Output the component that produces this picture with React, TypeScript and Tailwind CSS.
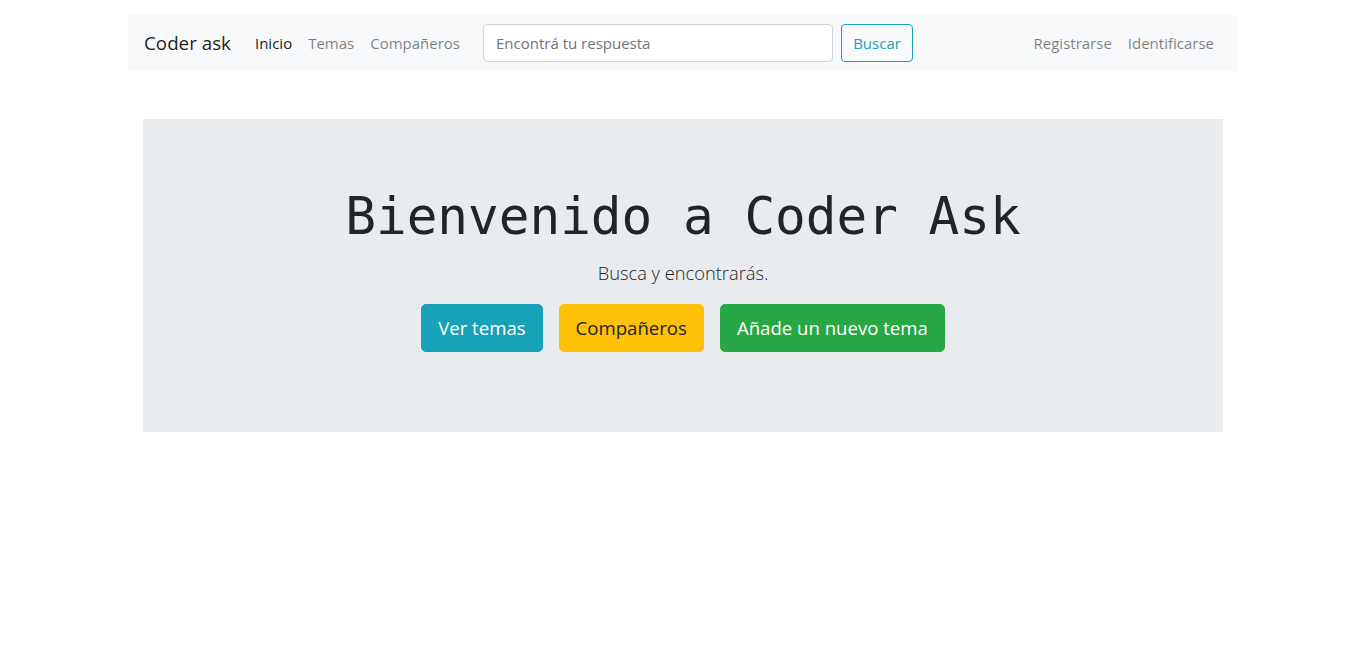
import React from 'react';

const navLinks = [
  { label: 'Inicio', active: true },
  { label: 'Temas', active: false },
  { label: 'Compañeros', active: false },
];

const App: React.FC = () => {
  return (
    <div
      className="min-h-screen bg-white text-[#212529]"
      style={{ fontFamily: '"Segoe UI", "Open Sans", "Noto Sans", sans-serif' }}
    >
      <div className="mx-auto w-[1140px] px-[15px] pt-[15px]">
        <nav className="flex h-[56px] items-center bg-[#f8f9fa] px-4">
          <a className="mr-4 text-[18.8px] leading-[30px] text-black/90">Coder ask</a>
          <ul className="flex items-center">
            {navLinks.map((link) => (
              <li key={link.label}>
                <a
                  className={`block px-2 py-2 text-[15px] leading-6 ${
                    link.active ? 'text-black/90' : 'text-black/50'
                  }`}
                >
                  {link.label}
                </a>
              </li>
            ))}
          </ul>
          <form className="ml-[15px] flex items-center">
            <input
              className="mr-2 h-[38px] w-[350px] rounded-[4px] border border-[#ced4da] bg-white px-3 text-[15px] text-[#495057] placeholder:text-[#6c757d] outline-none"
              placeholder="Encontrá tu respuesta"
            />
            <button
              type="button"
              className="h-[38px] w-[72px] rounded-[4px] border border-[#17a2b8] text-[15px] text-[#17a2b8]"
            >
              Buscar
            </button>
          </form>
          <ul className="ml-auto flex items-center">
            <li>
              <a className="block px-2 py-2 text-[15px] leading-6 text-black/50">Registrarse</a>
            </li>
            <li>
              <a className="block px-2 py-2 text-[15px] leading-6 text-black/50">Identificarse</a>
            </li>
          </ul>
        </nav>

        <div className="mx-[15px] mt-[48px] bg-[#e9ecef] px-8 pt-16 pb-16 text-center">
          <h1
            className="mb-2 text-[51px] leading-[67px] text-[#212529]"
            style={{ fontFamily: '"DejaVu Sans Mono", "Liberation Mono", monospace' }}
          >
            Bienvenido a Coder Ask
          </h1>
          <p className="mb-4 text-[18.3px] font-light leading-[30px]">Busca y encontrarás.</p>
          <p className="mb-4 flex justify-center gap-4">
            <a className="rounded-[5px] border border-[#17a2b8] bg-[#17a2b8] px-4 py-2 text-[18.6px] leading-[30px] text-white">
              Ver temas
            </a>
            <a className="rounded-[5px] border border-[#ffc107] bg-[#ffc107] px-4 py-2 text-[18.6px] leading-[30px] text-[#212529]">
              Compañeros
            </a>
            <a className="rounded-[5px] border border-[#28a745] bg-[#28a745] px-4 py-2 text-[18.6px] leading-[30px] text-white">
              Añade un nuevo tema
            </a>
          </p>
        </div>
      </div>
    </div>
  );
};

export default App;
